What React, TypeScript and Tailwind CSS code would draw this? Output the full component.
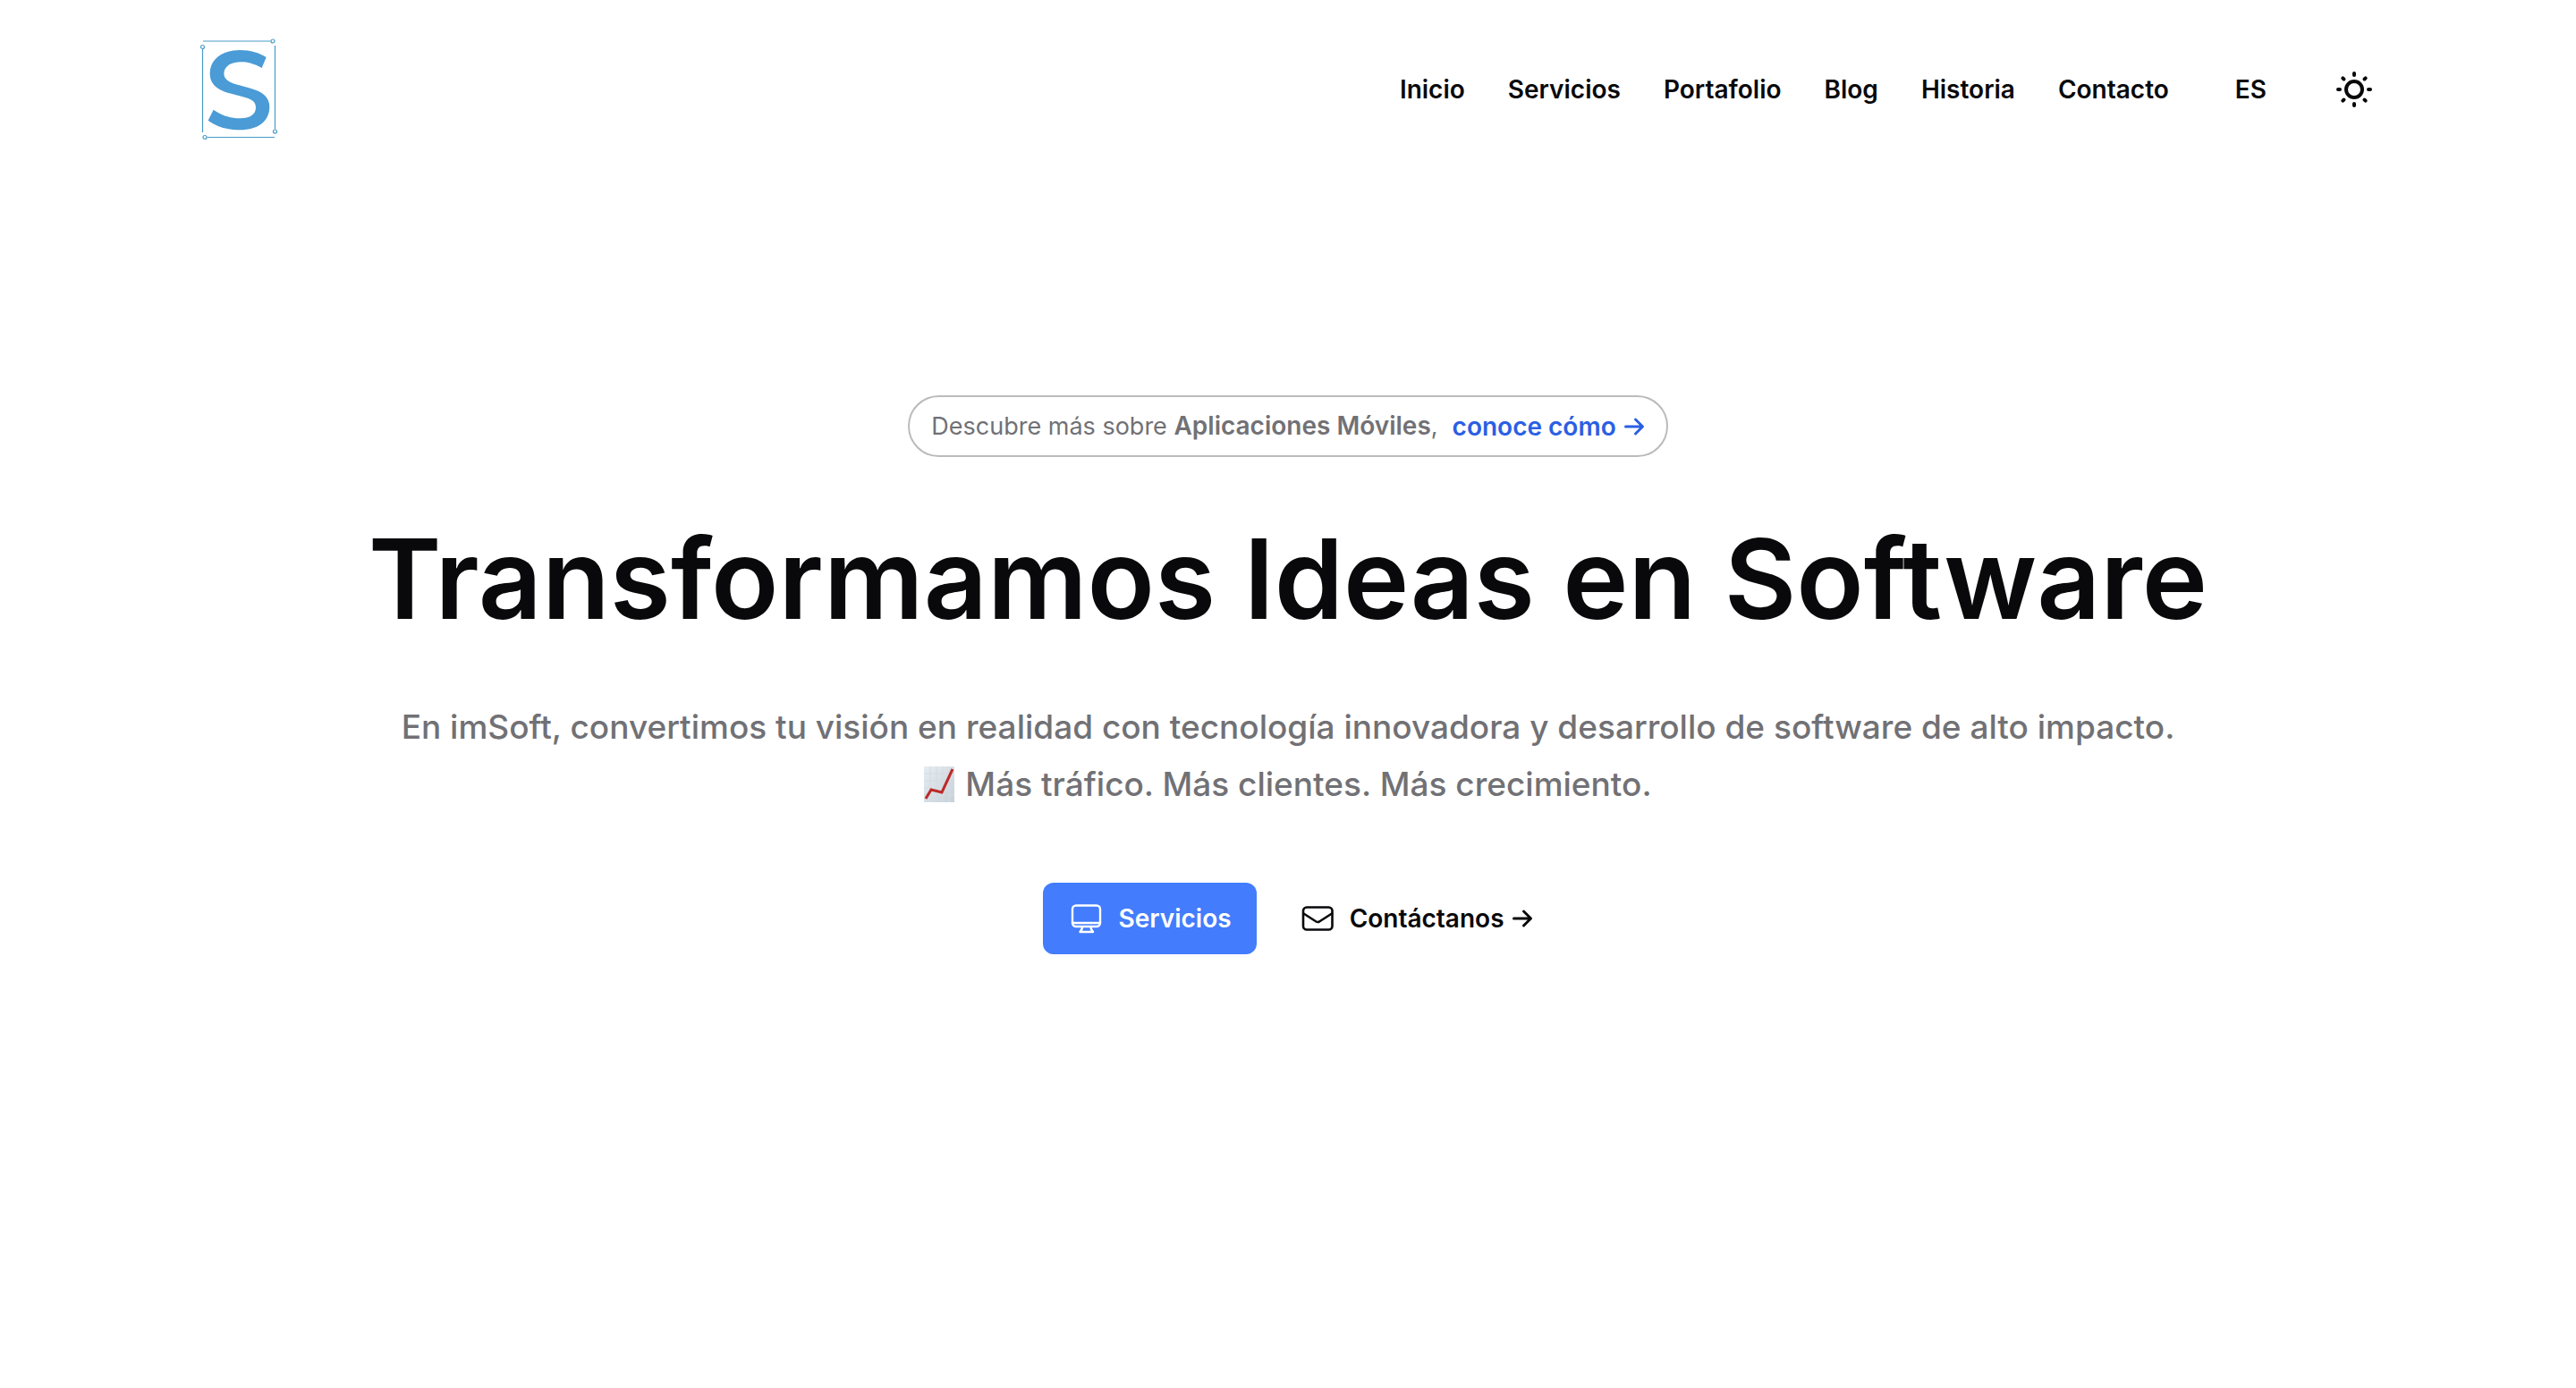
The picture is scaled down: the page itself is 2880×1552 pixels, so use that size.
import React from "react";

const navItems = ["Inicio", "Servicios", "Portafolio", "Blog", "Historia", "Contacto"];

function Logo() {
  return (
    <svg viewBox="0 0 88 116" className="h-[116px] w-[88px]" aria-hidden="true">
      <g fill="none" stroke="#4a9bc6" strokeWidth="1.2">
        <path d="M3 4H78.500M2.500 13V106M7.500 111.500H83M83.500 9V102.500" />
        <circle cx="81" cy="4" r="2" />
        <circle cx="2.500" cy="10.500" r="2" />
        <circle cx="5" cy="111.500" r="2" />
        <circle cx="83.500" cy="105" r="2" />
      </g>
      <path
        transform="translate(-24 -12) scale(.3333)"
        fill="#4a9bd6"
        d="M293 102L278 138C250 122 225 117 205 118C170 119 152 135 151 156C151 178 170 187 200 195L240 206C285 218 304 240 304 268C304 318 265 346 205 346C160 346 125 334 98 314L116 278C140 296 172 307 205 307C240 307 258 293 258 271C258 252 245 243 215 235L170 223C125 211 104 190 104 157C104 108 145 78 205 78C240 78 270 87 293 102Z"
      />
    </svg>
  );
}

function ArrowRight({ className }: { className: string }) {
  return (
    <svg viewBox="0 0 24 24" className={className} fill="none" stroke="currentColor" strokeWidth="3" strokeLinecap="round" strokeLinejoin="round" aria-hidden="true">
      <path d="M2.500 12H21M13.500 4L21.500 12L13.500 20" />
    </svg>
  );
}

function SunIcon() {
  return (
    <svg viewBox="0 0 48 48" className="size-12" fill="none" stroke="currentColor" strokeWidth="4" strokeLinecap="round" aria-hidden="true">
      <circle cx="24" cy="24" r="9" />
      <path d="M24 6v2M24 40v2M6 24h2M40 24h2M11.300 11.300l1.200 1.200M35.500 35.500l1.200 1.200M11.300 36.700l1.200-1.200M35.500 12.500l1.200-1.200" />
    </svg>
  );
}

function DesktopIcon() {
  return (
    <svg viewBox="0 0 40 40" className="size-10" fill="none" stroke="currentColor" strokeWidth="2.400" strokeLinecap="round" strokeLinejoin="round" aria-hidden="true">
      <rect x="5" y="5.500" width="31" height="23.500" rx="4" />
      <path d="M5 25H36M16 29.500L15.500 32L13.500 35H28L26 32L25.500 29.500" />
    </svg>
  );
}

function MailIcon() {
  return (
    <svg viewBox="0 0 40 40" className="size-10" fill="none" stroke="currentColor" strokeWidth="2.600" strokeLinecap="round" strokeLinejoin="round" aria-hidden="true">
      <rect x="4" y="7.500" width="32.500" height="25" rx="4" />
      <path d="M4.500 14.500L18.500 23.500Q20.200 24.500 22 23.500L36 14.500" />
    </svg>
  );
}

function ChartIcon() {
  return (
    <svg viewBox="0 0 34 40" className="mr-3 inline-block h-10 w-[34px] align-[-7px]" role="img" aria-label="Gráfica en aumento">
      <defs>
        <linearGradient id="paper" x1="0" y1="0" x2="1" y2="1">
          <stop offset="0" stopColor="#e6edf2" />
          <stop offset="1" stopColor="#c8d1d8" />
        </linearGradient>
      </defs>
      <rect width="34" height="40" fill="url(#paper)" />
      <path d="M7 0v40M14 0v40M21 0v40M28 0v40M0 8h34M0 16h34M0 24h34M0 32h34" stroke="#d3dce2" strokeWidth="1" />
      <path d="M2 36L8 26L20 29L32 3" fill="none" stroke="#bd2a2a" strokeWidth="3" />
    </svg>
  );
}

export default function App() {
  return (
    <div className="min-h-screen bg-white font-[Inter,sans-serif] text-[28px] leading-[48px] text-zinc-950">
      <header className="mx-auto flex max-w-[2560px] items-center justify-between px-16 py-[42px]">
        <a href="#inicio" aria-label="imSoft">
          <Logo />
        </a>
        <nav className="flex items-center gap-12 font-semibold">
          {navItems.map((item) => (
            <a key={item} href={"#" + item.toLowerCase()}>
              {item}
            </a>
          ))}
          <button type="button" className="ml-[26px] font-semibold">ES</button>
          <button type="button" aria-label="Cambiar tema" className="ml-[26px]">
            <SunIcon />
          </button>
        </nav>
      </header>

      <main className="flex flex-col items-center px-16 pt-[242px] text-center">
        <p className="flex items-center rounded-full border-2 border-[#bbbbbd] px-6 py-2 text-[#717175]">
          <span className="text-[27px]">
            Descubre más sobre <strong className="text-[28px] font-semibold">Aplicaciones Móviles</strong>,
          </span>
          <a href="#conoce" className="ml-4 flex items-center gap-2 font-semibold text-[#2b5fe3]">
            conoce cómo
            <ArrowRight className="size-6" />
          </a>
        </p>
        <h1 className="mt-16 text-[124px] leading-[144px] font-semibold">Transformamos Ideas en Software</h1>
        <p className="mt-[62px] text-[37px] leading-[64px] font-medium text-[#717175]">
          En imSoft, convertimos tu visión en realidad con tecnología innovadora y desarrollo de software de alto impacto.
          <br />
          <ChartIcon />
          Más tráfico. Más clientes. Más crecimiento.
        </p>
        <div className="mt-[78px] flex items-center gap-12 font-semibold">
          <a href="#servicios" className="flex items-center gap-4 rounded-xl bg-[#437cfd] px-7 py-4 text-white">
            <DesktopIcon />
            Servicios
          </a>
          <a href="#contacto" className="flex items-center gap-4">
            <MailIcon />
            <span className="flex items-center gap-2">
              Contáctanos
              <ArrowRight className="size-6" />
            </span>
          </a>
        </div>
      </main>
    </div>
  );
}
